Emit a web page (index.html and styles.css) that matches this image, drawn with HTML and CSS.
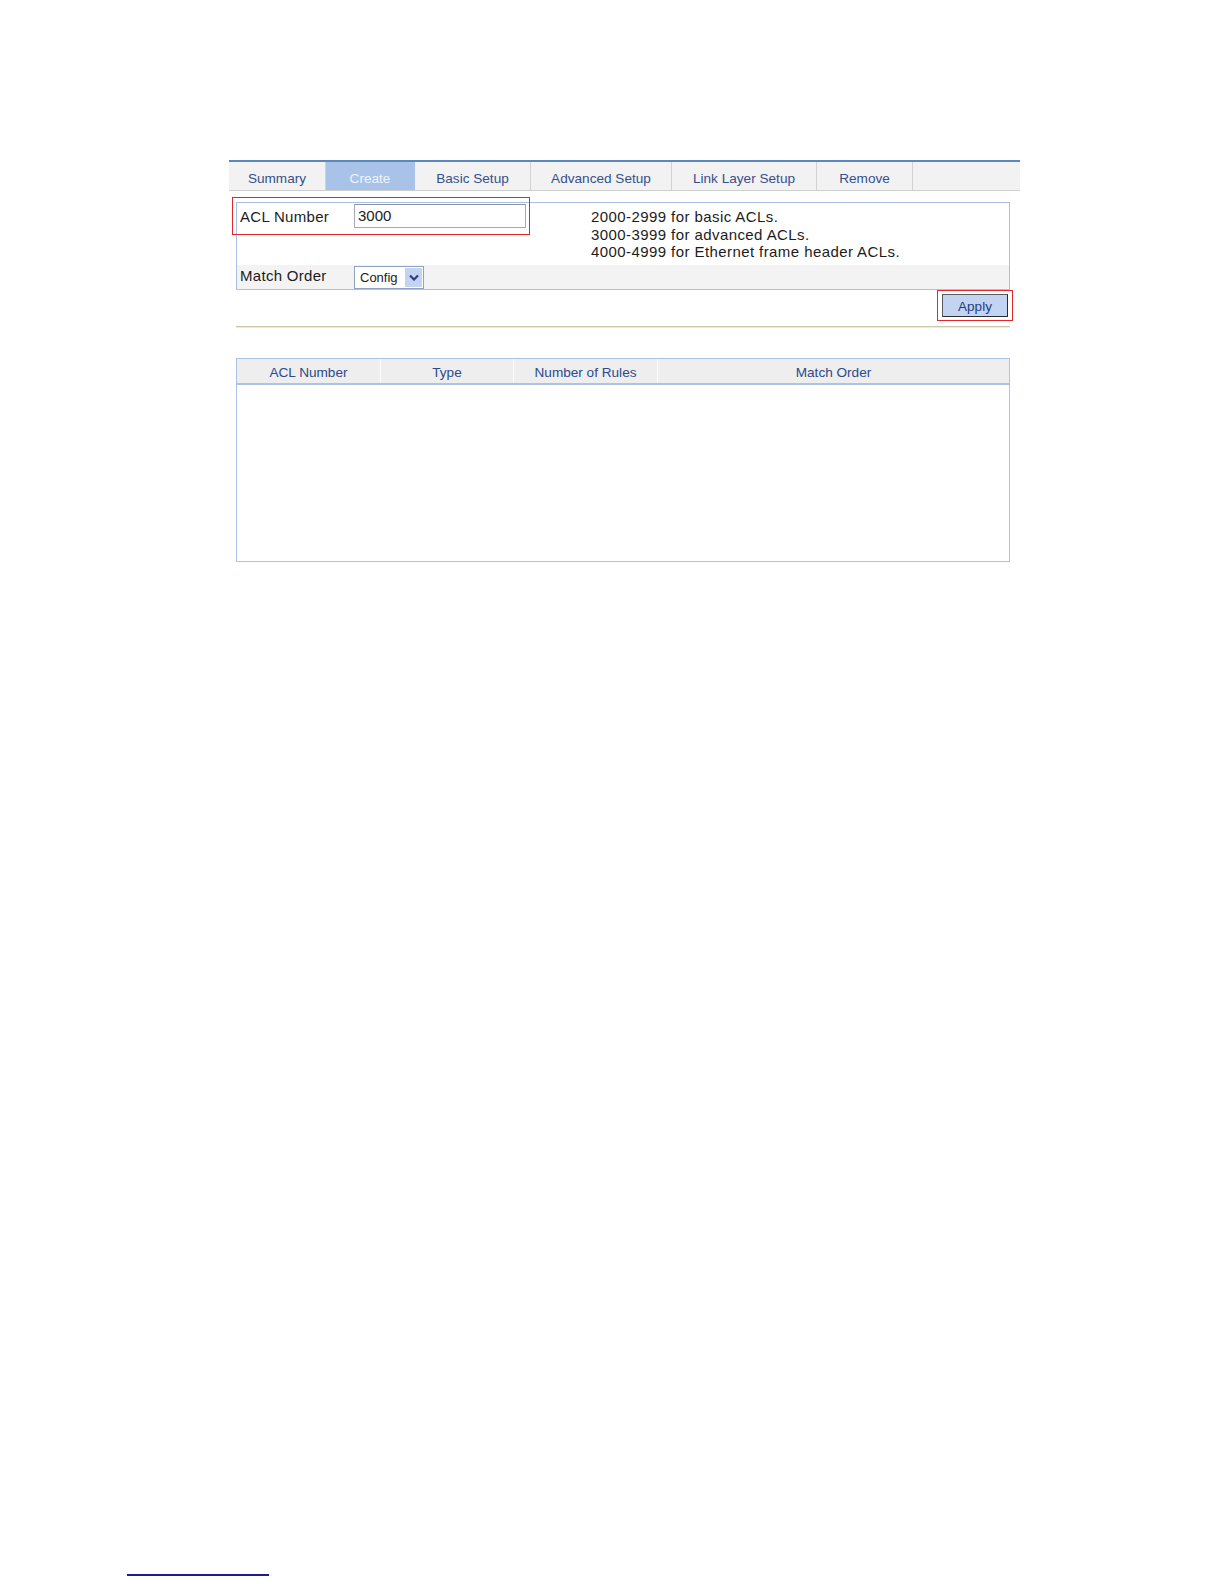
FILE: index.html
```html
<!DOCTYPE html>
<html>
<head>
<meta charset="utf-8">
<link rel="stylesheet" href="styles.css">
</head>
<body>
<div class="page">
  <div class="tabs">
    <div class="tab w-summary">Summary</div>
    <div class="tab tab-active w-create">Create</div>
    <div class="tab w-basic">Basic Setup</div>
    <div class="tab w-adv">Advanced Setup</div>
    <div class="tab w-link">Link Layer Setup</div>
    <div class="tab w-remove">Remove</div>
    <div class="tab tab-fill"></div>
  </div>

  <div class="content">
    <div class="form-box">
      <div class="row row-first">
        <div class="label">ACL Number</div>
        <div class="field"><div class="input">3000</div></div>
        <div class="desc">
          <div>2000-2999 for basic ACLs.</div>
          <div>3000-3999 for advanced ACLs.</div>
          <div>4000-4999 for Ethernet frame header ACLs.</div>
        </div>
      </div>
      <div class="row row-second">
        <div class="label">Match Order</div>
        <div class="field">
          <div class="select">
            <span class="select-text">Config</span>
            <span class="select-btn"><svg width="10" height="7" viewBox="0 0 10 7"><path d="M1 1.5 L5 5.5 L9 1.5" fill="none" stroke="#2b3f86" stroke-width="2.2"/></svg></span>
          </div>
        </div>
      </div>
      <div class="highlight-acl"></div>
    </div>

    <div class="apply-row">
      <span class="highlight-apply"><span class="btn">Apply</span></span>
    </div>

    <div class="sep"></div>

    <div class="table">
      <div class="thead">
        <div class="th c1">ACL Number</div>
        <div class="th c2">Type</div>
        <div class="th c3">Number of Rules</div>
        <div class="th c4">Match Order</div>
      </div>
      <div class="tbody"></div>
    </div>
  </div>

  <div class="footer-line"></div>
</div>
</body>
</html>
```

FILE: styles.css
```css
html, body {
  margin: 0;
  padding: 0;
  background: #ffffff;
}
body {
  font-family: "Liberation Sans", Arial, sans-serif;
  color: #1c1c1c;
}
.page {
  width: 1224px;
  height: 1584px;
  position: relative;
  padding-top: 160px;
  box-sizing: border-box;
}

/* Tabs */
.tabs {
  margin-left: 229px;
  width: 791px;
  height: 31px;
  display: flex;
  border-top: 2px solid #5b87bb;
  border-bottom: 1px solid #cfcfcf;
  background: #f2f2f2;
  box-sizing: border-box;
}
.tab {
  height: 100%;
  display: flex;
  align-items: center;
  justify-content: center;
  font-size: 13.6px;
  color: #36508f;
  border-right: 1px solid #d2d2d2;
  box-sizing: border-box;
  padding-top: 5px;
}
.tab-active {
  background: #a9c3e8;
  color: #eef3fb;
  border-right-color: #a9c3e8;
}
.tab-fill { flex: 1; border-right: none; }
.w-summary { width: 97px; }
.w-create { width: 89px; }
.w-basic { width: 116px; }
.w-adv { width: 141px; }
.w-link { width: 145px; }
.w-remove { width: 96px; }

/* Content */
.content {
  margin-left: 236px;
  width: 774px;
  padding-top: 11px;
}
.form-box {
  position: relative;
  border: 1px solid #a9c0e2;
  background: #ffffff;
}
.row {
  display: flex;
}
.row-first {
  height: 62px;
}
.row-second {
  height: 24px;
  background: #f3f3f3;
  align-items: center;
}
.label {
  width: 117px;
  padding-left: 3px;
  font-size: 15px;
  letter-spacing: 0.3px;
  box-sizing: border-box;
}
.row-first .label {
  padding-top: 5px;
}
.row-second .label {
  padding-bottom: 3px;
}
.field {
  width: 237px;
}
.row-first .field {
  padding-top: 1px;
}
.input {
  width: 172px;
  height: 24px;
  box-sizing: border-box;
  border: 1px solid #a4a9b4;
  border-top-color: #8d939e;
  font-size: 15px;
  padding-left: 3px;
  line-height: 22px;
  background: #fff;
}
.desc {
  font-size: 15px;
  letter-spacing: 0.42px;
  line-height: 17.7px;
  padding-top: 5px;
  color: #1c1c1c;
}
.select {
  width: 70px;
  height: 23px;
  box-sizing: border-box;
  border: 1px solid #8ea3c4;
  background: #fff;
  display: flex;
  align-items: center;
  justify-content: space-between;
  padding: 1px;
}
.select-text {
  font-size: 13px;
  padding-left: 4px;
  color: #1c1c1c;
}
.select-btn {
  width: 17px;
  height: 19px;
  background: #c3d3f1;
  display: flex;
  align-items: center;
  justify-content: center;
}
.highlight-acl {
  position: absolute;
  left: -5px;
  top: -6px;
  width: 298px;
  height: 38px;
  border: 1px solid #e2262c;
  box-sizing: border-box;
  pointer-events: none;
}

/* Apply */
.apply-row {
  display: flex;
  justify-content: flex-end;
  margin-right: -3px;
  height: 31px;
}
.highlight-apply {
  display: inline-flex;
  border: 1px solid #e2262c;
  padding: 3px 4px;
}
.btn {
  width: 66px;
  height: 23px;
  box-sizing: border-box;
  border: 1px solid #2b2b2b;
  border-top-color: #5a5a5a;
  border-left-color: #5a5a5a;
  background: #c3d3f2;
  display: flex;
  align-items: center;
  justify-content: center;
  font-size: 13.5px;
  color: #24407e;
  padding-top: 2px;
}

.sep {
  margin-top: 5px;
  height: 1px;
  background: #c9c8a8;
  border-bottom: 1px solid #ecebdf;
}

/* Table */
.table {
  margin-top: 30px;
  height: 204px;
  border: 1px solid #a9c4e4;
  box-sizing: border-box;
  display: flex;
  flex-direction: column;
}
.thead {
  display: flex;
  height: 26px;
  background: #eeeeee;
  border-bottom: 2px solid #a9c4e4;
  box-sizing: border-box;
}
.th {
  display: flex;
  align-items: center;
  justify-content: center;
  font-size: 13.6px;
  color: #2c4a8c;
  border-right: 1px solid #fbfbfb;
  box-sizing: border-box;
  padding-top: 2px;
}
.c1 { width: 144px; }
.c2 { width: 133px; }
.c3 { width: 144px; }
.c4 { flex: 1; border-right: none; }
.tbody {
  flex: 1;
  background: #fff;
}

.footer-line {
  position: absolute;
  left: 127px;
  top: 1574px;
  width: 142px;
  height: 2px;
  background: #1c1c8e;
}
```
